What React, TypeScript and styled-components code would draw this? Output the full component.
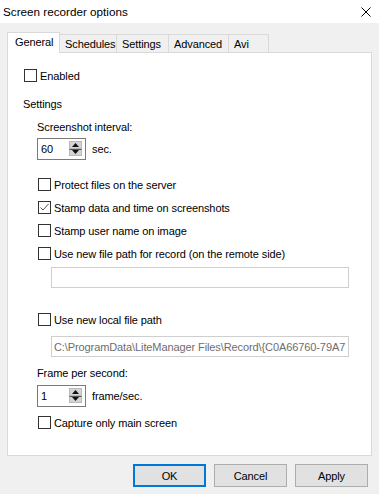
import React from "react";
import styled, { createGlobalStyle } from "styled-components";

const Global = createGlobalStyle`
  html, body { margin: 0; padding: 0; background: #f0f0f0; }
  body {
    font-family: "Liberation Sans", Arial, sans-serif;
    font-size: 11px;
    letter-spacing: -0.1px;
    color: #000;
  }
  * { box-sizing: border-box; }
`;

const Window = styled.div`
  width: 379px;
  height: 494px;
  background: #f0f0f0;
  display: flex;
  flex-direction: column;
  overflow: hidden;
`;

const TitleBar = styled.div`
  height: 23px;
  background: #fff;
  display: flex;
  align-items: center;
  justify-content: space-between;
  padding: 0 8px 0 3px;
`;

const Title = styled.span`
  font-size: 11.7px;
  letter-spacing: 0;
  line-height: 14px;
`;

const CloseBtn = styled.div`
  width: 10px;
  height: 10px;
  display: flex;
`;

const Body = styled.div`
  padding: 9px 0 0 7px;
  display: flex;
  flex-direction: column;
`;

const TabStrip = styled.div`
  height: 20px;
  display: flex;
  align-items: flex-end;
`;

const Tab = styled.div<{ $active?: boolean; $w: number }>`
  position: relative;
  z-index: ${(p) => (p.$active ? 2 : 1)};
  width: ${(p) => p.$w}px;
  height: ${(p) => (p.$active ? 21 : 18)}px;
  margin-bottom: ${(p) => (p.$active ? -1 : 0)}px;
  margin-left: -1px;
  &:first-child { margin-left: 0; }
  border: 1px solid #d9d9d9;
  border-bottom: none;
  background: ${(p) => (p.$active ? "#fff" : "#f0f0f0")};
  display: flex;
  align-items: center;
  justify-content: flex-start;
  padding-left: ${(p) => (p.$active ? 7 : 5)}px;
  padding-bottom: ${(p) => (p.$active ? 2 : 0)}px;
  line-height: 14px;
  white-space: nowrap;
`;

const Panel = styled.div`
  width: 365px;
  height: 404px;
  background: #fff;
  border: 1px solid #d9d9d9;
  display: flex;
  flex-direction: column;
`;

const Row = styled.div<{ $mt: number; $indent: number }>`
  margin-top: ${(p) => p.$mt}px;
  margin-left: ${(p) => p.$indent}px;
  display: flex;
  align-items: center;
`;

const Label = styled.span`
  line-height: 14px;
  white-space: nowrap;
`;

const CheckRow = styled.label`
  display: flex;
  align-items: center;
  height: 13px;
`;

const Box = styled.span`
  width: 13px;
  height: 13px;
  border: 1px solid #333;
  background: #fff;
  display: flex;
  align-items: center;
  justify-content: center;
  flex: none;
`;

const CheckText = styled.span`
  margin-left: 3px;
  line-height: 14px;
  white-space: nowrap;
`;

const Spin = styled.div`
  width: 49px;
  height: 22px;
  border: 1px solid #7a7a7a;
  background: #fff;
  display: flex;
  align-items: center;
  justify-content: space-between;
  padding: 0 3px 0 3px;
`;

const SpinValue = styled.span`
  line-height: 14px;
`;

const SpinButtons = styled.div`
  display: flex;
  flex-direction: column;
  width: 13px;
  height: 15px;
  margin-top: -1px;
`;

const SpinBtn = styled.div<{ $down?: boolean }>`
  flex: 1;
  background: #d4d4d4;
  border: 1px solid #b9b9b9;
  border-top: ${(p) => (p.$down ? "1px solid #555" : "1px solid #b9b9b9")};
  display: flex;
  align-items: center;
  justify-content: center;
`;

const Unit = styled.span`
  margin-left: 6px;
  line-height: 14px;
`;

const TextBox = styled.div<{ $disabled?: boolean }>`
  width: 298px;
  height: 21px;
  border: 1px solid #cfcfcf;
  background: #fff;
  color: ${(p) => (p.$disabled ? "#6d6d6d" : "#000")};
  display: flex;
  align-items: center;
  padding-left: 2px;
  overflow: hidden;
  white-space: nowrap;
  line-height: 14px;
`;

const Footer = styled.div`
  display: flex;
  justify-content: flex-end;
  gap: 8px;
  padding: 8px 11px 0 0;
`;

const Button = styled.button<{ $default?: boolean }>`
  width: 73px;
  height: 23px;
  font: inherit;
  letter-spacing: inherit;
  color: #000;
  background: #e1e1e1;
  border: ${(p) => (p.$default ? "2px solid #0078d7" : "1px solid #adadad")};
  padding: 0;
  line-height: 14px;
`;

const Check = ({ checked, label }: { checked?: boolean; label: string }) => (
  <CheckRow>
    <Box>
      {checked && (
        <svg width="11" height="11" viewBox="0 0 11 11">
          <polyline points="1.5,5.5 4,8 9.5,2" fill="none" stroke="#555" strokeWidth="1" />
        </svg>
      )}
    </Box>
    <CheckText>{label}</CheckText>
  </CheckRow>
);

const SpinBox = ({ value }: { value: string }) => (
  <Spin>
    <SpinValue>{value}</SpinValue>
    <SpinButtons>
      <SpinBtn>
        <svg width="7" height="4" viewBox="0 0 7 4">
          <polygon points="0,4 3.5,0 7,4" fill="#111" />
        </svg>
      </SpinBtn>
      <SpinBtn $down>
        <svg width="7" height="4" viewBox="0 0 7 4">
          <polygon points="0,0 3.5,4 7,0" fill="#111" />
        </svg>
      </SpinBtn>
    </SpinButtons>
  </Spin>
);

const tabs = [
  { name: "General", w: 53, active: true },
  { name: "Schedules", w: 58 },
  { name: "Settings", w: 53 },
  { name: "Advanced", w: 61 },
  { name: "Avi", w: 41 },
];

export default function App() {
  return (
    <Window>
      <Global />
      <TitleBar>
        <Title>Screen recorder options</Title>
        <CloseBtn>
          <svg width="10" height="10" viewBox="0 0 10 10">
            <path d="M0.5 0.5 L9.5 9.5 M9.5 0.5 L0.5 9.5" stroke="#000" strokeWidth="1" />
          </svg>
        </CloseBtn>
      </TitleBar>
      <Body>
        <TabStrip>
          {tabs.map((t) => (
            <Tab key={t.name} $active={t.active} $w={t.w}>
              {t.name}
            </Tab>
          ))}
        </TabStrip>
        <Panel>
          <Row $mt={16} $indent={16}>
            <Check label="Enabled" />
          </Row>
          <Row $mt={15} $indent={15}>
            <Label>Settings</Label>
          </Row>
          <Row $mt={9} $indent={29}>
            <Label>Screenshot interval:</Label>
          </Row>
          <Row $mt={4} $indent={29}>
            <SpinBox value="60" />
            <Unit>sec.</Unit>
          </Row>
          <Row $mt={18} $indent={30}>
            <Check label="Protect files on the server" />
          </Row>
          <Row $mt={10} $indent={30}>
            <Check checked label="Stamp data and time on screenshots" />
          </Row>
          <Row $mt={10} $indent={30}>
            <Check label="Stamp user name on image" />
          </Row>
          <Row $mt={10} $indent={30}>
            <Check label="Use new file path for record (on the remote side)" />
          </Row>
          <Row $mt={7} $indent={43}>
            <TextBox />
          </Row>
          <Row $mt={25} $indent={30}>
            <Check label="Use new local file path" />
          </Row>
          <Row $mt={10} $indent={43}>
            <TextBox $disabled>C:\ProgramData\LiteManager Files\Record\{"{"}C0A66760-79A7</TextBox>
          </Row>
          <Row $mt={9} $indent={29}>
            <Label>Frame per second:</Label>
          </Row>
          <Row $mt={5} $indent={29}>
            <SpinBox value="1" />
            <Unit>frame/sec.</Unit>
          </Row>
          <Row $mt={9} $indent={30}>
            <Check label="Capture only main screen" />
          </Row>
        </Panel>
        <Footer>
          <Button $default>OK</Button>
          <Button>Cancel</Button>
          <Button>Apply</Button>
        </Footer>
      </Body>
    </Window>
  );
}
